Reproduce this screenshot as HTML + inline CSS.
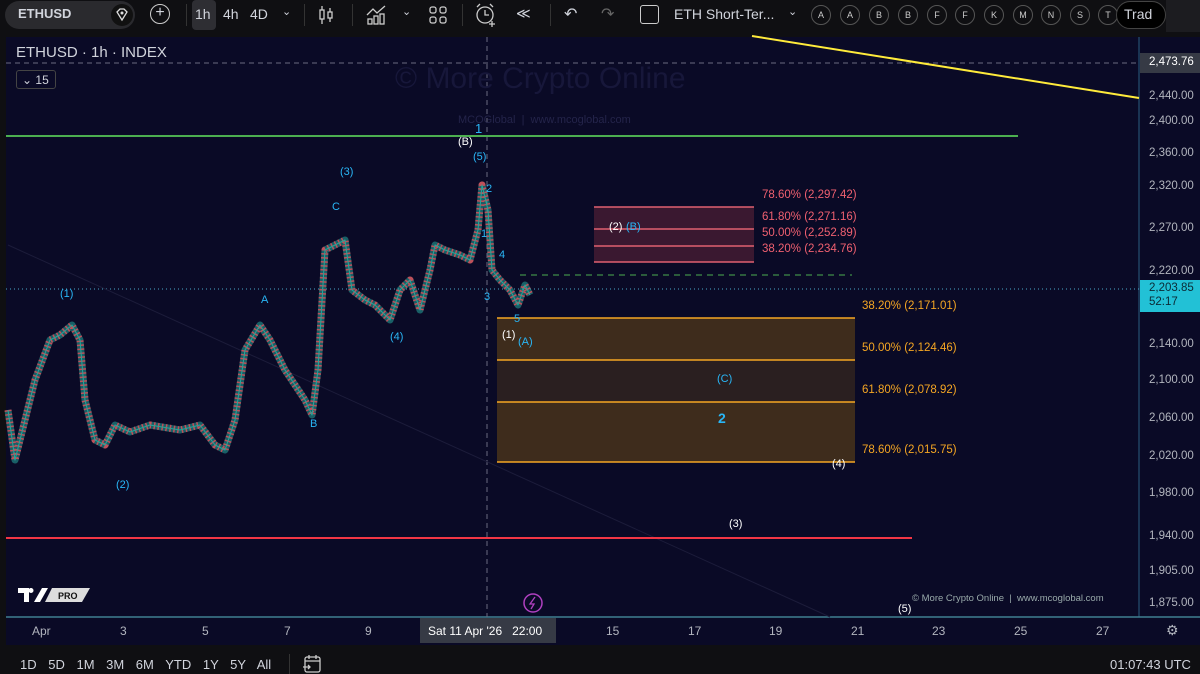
<!DOCTYPE html>
<html><head><meta charset="utf-8"><style>
*{margin:0;padding:0;box-sizing:border-box}
body{width:1200px;height:674px;background:#0f0f12;overflow:hidden;font-family:"Liberation Sans",sans-serif;color:#d1d4dc;position:relative}
.a{position:absolute;white-space:nowrap}
.tb{font-size:14px;color:#d1d4dc}
.circ{position:absolute;top:5px;width:20px;height:20px;border:1px solid #555;border-radius:50%;font-size:9px;text-align:center;line-height:18px;color:#ccc}
.px{position:absolute;left:1149px;font-size:11.5px;color:#b2b5be}
.tx{position:absolute;top:624px;font-size:12px;color:#b2b5be}
</style></head><body>
<!-- top toolbar -->
<div class="a" style="left:5px;top:1px;width:130px;height:28px;background:#2a2a2e;border-radius:14px"></div>
<div class="a tb" style="left:18px;top:6px;font-weight:bold;font-size:13px">ETHUSD</div>
<div class="a" style="left:111px;top:4px;width:22px;height:22px;border-radius:50%;background:#111"></div>
<svg class="a" style="left:114px;top:7px" width="16" height="16"><path d="M3 5 L6 2 H10 L13 5 L8 13 Z" fill="none" stroke="#ddd" stroke-width="1.3"/><circle cx="8" cy="6" r="1.5" fill="#ddd"/></svg>
<div class="a" style="left:150px;top:4px;width:20px;height:20px;border:1.5px solid #ccc;border-radius:50%;text-align:center;line-height:16px;font-size:16px">+</div>
<div class="a" style="left:186px;top:4px;width:1px;height:22px;background:#333"></div>
<div class="a" style="left:192px;top:0;width:24px;height:30px;background:#2e2e33;border-radius:4px"></div>
<div class="a tb" style="left:195px;top:6px">1h</div>
<div class="a tb" style="left:223px;top:6px">4h</div>
<div class="a tb" style="left:250px;top:6px">4D</div>
<div class="a tb" style="left:282px;top:5px;font-size:11px">⌄</div>
<div class="a" style="left:304px;top:4px;width:1px;height:22px;background:#333"></div>
<svg class="a" style="left:316px;top:5px" width="20" height="20" fill="none" stroke="#ccc" stroke-width="1.3"><line x1="6" y1="1" x2="6" y2="19"/><rect x="4" y="5" width="4" height="9" fill="#0f0f12"/><line x1="14" y1="3" x2="14" y2="17"/><rect x="12" y="7" width="4" height="6" fill="#0f0f12"/></svg>
<div class="a" style="left:352px;top:4px;width:1px;height:22px;background:#333"></div>
<svg class="a" style="left:365px;top:4px" width="22" height="22" fill="none" stroke="#ccc" stroke-width="1.3"><path d="M2 11 L8 5 L12 9 L20 2"/><rect x="3" y="15" width="4" height="5"/><rect x="9" y="12" width="4" height="8"/><rect x="15" y="10" width="4" height="10"/></svg>
<div class="a tb" style="left:402px;top:5px;font-size:11px">⌄</div>
<svg class="a" style="left:428px;top:5px" width="20" height="20" fill="none" stroke="#ccc" stroke-width="1.3"><rect x="2" y="2" width="6" height="6" rx="2"/><rect x="12" y="2" width="6" height="6" rx="2"/><rect x="2" y="12" width="6" height="6" rx="2"/><rect x="12" y="12" width="6" height="6" rx="2"/></svg>
<div class="a" style="left:462px;top:4px;width:1px;height:22px;background:#333"></div>
<svg class="a" style="left:474px;top:3px" width="24" height="24" fill="none" stroke="#ccc" stroke-width="1.3"><circle cx="11" cy="12" r="8"/><path d="M11 7 V12 H15 M3 4 L6 1 M19 4 L16 1 M18 18 V24 M15 21 H21"/></svg>
<div class="a tb" style="left:516px;top:5px;font-size:14px">≪</div>
<div class="a" style="left:550px;top:4px;width:1px;height:22px;background:#333"></div>
<div class="a tb" style="left:564px;top:4px;font-size:16px">↶</div>
<div class="a tb" style="left:601px;top:4px;font-size:16px;color:#666">↷</div>
<div class="a" style="left:640px;top:5px;width:19px;height:19px;border:1.5px solid #ccc;border-radius:3px"></div>
<div class="a tb" style="left:674px;top:6px">ETH Short-Ter...</div>
<div class="a tb" style="left:788px;top:5px;font-size:11px">⌄</div>
<div class="circ" style="left:811px">A</div><div class="circ" style="left:840px">A</div><div class="circ" style="left:869px">B</div><div class="circ" style="left:898px">B</div><div class="circ" style="left:927px">F</div><div class="circ" style="left:955px">F</div><div class="circ" style="left:984px">K</div><div class="circ" style="left:1013px">M</div><div class="circ" style="left:1041px">N</div><div class="circ" style="left:1070px">S</div><div class="circ" style="left:1098px">T</div>
<div class="a" style="left:1116px;top:1px;width:50px;height:28px;background:#000;border:1px solid #444;border-radius:14px"></div>
<div class="a tb" style="left:1124px;top:6px;font-size:14px">Trad</div>
<div class="a" style="left:1166px;top:0;width:34px;height:32px;background:#1c1c20"></div>
<!-- chart -->
<div class="a" style="left:6px;top:37px;width:1194px;height:608px;background:#0a0a26"></div>
<svg class="a" style="left:0;top:0" width="1200" height="674">
<line x1="1139" y1="37" x2="1139" y2="617" stroke="#2a5f80" stroke-width="1"/>
<line x1="6" y1="617" x2="1200" y2="617" stroke="#3f7f90" stroke-width="1.5"/>
<line x1="6" y1="63" x2="1139" y2="63" stroke="#6a6a80" stroke-dasharray="5,4" stroke-width="1"/>
<line x1="487" y1="37" x2="487" y2="617" stroke="#6a6a80" stroke-dasharray="5,4" stroke-width="1"/>
<line x1="6" y1="289" x2="1139" y2="289" stroke="#4aa8c8" stroke-dasharray="1,3" stroke-width="1"/>
<line x1="8" y1="245" x2="830" y2="617" stroke="#1c1c3a" stroke-width="1"/>
<line x1="752" y1="36" x2="1139" y2="98" stroke="#ffeb3b" stroke-width="2"/>
<line x1="6" y1="136" x2="1018" y2="136" stroke="#4caf50" stroke-width="2"/>
<line x1="6" y1="538" x2="912" y2="538" stroke="#f23645" stroke-width="2"/>
<line x1="520" y1="275" x2="852" y2="275" stroke="#4caf50" stroke-dasharray="6,5" stroke-width="1"/>
<rect x="497" y="318" width="358" height="42" fill="#3e2c1c"/>
<rect x="497" y="360" width="358" height="42" fill="#2a1f20"/>
<rect x="497" y="402" width="358" height="60" fill="#3e2c1c"/>
<g stroke="#f5a623" stroke-width="1.5"><line x1="497" y1="318" x2="855" y2="318"/><line x1="497" y1="360" x2="855" y2="360"/><line x1="497" y1="402" x2="855" y2="402"/><line x1="497" y1="462" x2="855" y2="462"/></g>
<rect x="594" y="207" width="160" height="55" fill="#3a1830"/>
<g stroke="#e06070" stroke-width="1.5"><line x1="594" y1="207" x2="754" y2="207"/><line x1="594" y1="229" x2="754" y2="229"/><line x1="594" y1="246" x2="754" y2="246"/><line x1="594" y1="262" x2="754" y2="262"/></g>
<g fill="none" stroke-linejoin="round">
<polyline stroke="#26a69a" stroke-width="7" opacity="0.55" points="8,410 15,460 25,420 35,380 50,340 60,335 72,325 80,340 85,400 95,440 105,445 115,425 130,432 150,425 180,430 200,425 215,445 225,450 235,420 245,350 260,325 270,340 285,370 295,385 305,400 312,415 318,370 325,250 335,245 345,240 352,290 365,300 375,305 390,320 400,290 410,280 420,310 430,270 435,245 445,250 460,255 470,260 478,230 482,185 488,210 492,270 500,280 510,290 518,305 525,285 530,295"/>
<polyline stroke="#c0505a" stroke-width="7" stroke-dasharray="1.5,2.5" points="8,410 15,460 25,420 35,380 50,340 60,335 72,325 80,340 85,400 95,440 105,445 115,425 130,432 150,425 180,430 200,425 215,445 225,450 235,420 245,350 260,325 270,340 285,370 295,385 305,400 312,415 318,370 325,250 335,245 345,240 352,290 365,300 375,305 390,320 400,290 410,280 420,310 430,270 435,245 445,250 460,255 470,260 478,230 482,185 488,210 492,270 500,280 510,290 518,305 525,285 530,295"/>
<polyline stroke="#26a69a" stroke-width="1" points="8,410 15,460 25,420 35,380 50,340 60,335 72,325 80,340 85,400 95,440 105,445 115,425 130,432 150,425 180,430 200,425 215,445 225,450 235,420 245,350 260,325 270,340 285,370 295,385 305,400 312,415 318,370 325,250 335,245 345,240 352,290 365,300 375,305 390,320 400,290 410,280 420,310 430,270 435,245 445,250 460,255 470,260 478,230 482,185 488,210 492,270 500,280 510,290 518,305 525,285 530,295"/>
</g>
<circle cx="533" cy="603" r="9" fill="none" stroke="#b040c0" stroke-width="1.5"/>
<path d="M535 597 L530 604 H534 L531 609" fill="none" stroke="#b040c0" stroke-width="1.3"/>
</svg>
<div class="a" style="left:16px;top:44px;font-size:15px;color:#d1d4dc">ETHUSD · 1h · INDEX</div>
<div class="a" style="left:16px;top:70px;width:40px;height:19px;border:1px solid #444;border-radius:3px;font-size:12px;padding:2px 5px">⌄ 15</div>
<div class="a" style="left:395px;top:62px;font-size:30px;color:#17173a">© More Crypto Online</div>
<div class="a" style="left:458px;top:114px;font-size:11px;color:#24244a">MCOGlobal &nbsp;|&nbsp; www.mcoglobal.com</div>
<!-- wave labels -->
<div class="a" style="font-size:11px;color:#29b6f6;left:60px;top:288px">(1)</div>
<div class="a" style="font-size:11px;color:#29b6f6;left:116px;top:479px">(2)</div>
<div class="a" style="font-size:11px;color:#29b6f6;left:340px;top:166px">(3)</div>
<div class="a" style="font-size:11px;color:#29b6f6;left:390px;top:331px">(4)</div>
<div class="a" style="font-size:11px;color:#29b6f6;left:473px;top:151px">(5)</div>
<div class="a" style="font-size:11px;color:#29b6f6;left:261px;top:294px">A</div>
<div class="a" style="font-size:11px;color:#29b6f6;left:310px;top:418px">B</div>
<div class="a" style="font-size:11px;color:#29b6f6;left:332px;top:201px">C</div>
<div class="a" style="font-size:13px;color:#29b6f6;left:475px;top:121px">1</div>
<div class="a" style="font-size:11px;color:#fff;left:458px;top:136px">(B)</div>
<div class="a" style="font-size:11px;color:#29b6f6;left:486px;top:183px">2</div>
<div class="a" style="font-size:11px;color:#29b6f6;left:481px;top:228px">1</div>
<div class="a" style="font-size:11px;color:#29b6f6;left:499px;top:249px">4</div>
<div class="a" style="font-size:11px;color:#29b6f6;left:484px;top:291px">3</div>
<div class="a" style="font-size:11px;color:#29b6f6;left:514px;top:313px">5</div>
<div class="a" style="font-size:11px;color:#fff;left:502px;top:329px">(1)</div>
<div class="a" style="font-size:11px;color:#29b6f6;left:518px;top:336px">(A)</div>
<div class="a" style="font-size:11px;color:#fff;left:609px;top:221px">(2)</div>
<div class="a" style="font-size:11px;color:#29b6f6;left:626px;top:221px">(B)</div>
<div class="a" style="font-size:11px;color:#29b6f6;left:717px;top:373px">(C)</div>
<div class="a" style="font-size:14px;color:#29b6f6;left:718px;top:410px;font-weight:bold">2</div>
<div class="a" style="font-size:11px;color:#fff;left:832px;top:458px">(4)</div>
<div class="a" style="font-size:11px;color:#fff;left:729px;top:518px">(3)</div>
<div class="a" style="font-size:11px;color:#fff;left:898px;top:603px">(5)</div>
<!-- fib labels -->
<div class="a" style="font-size:11.5px;color:#f06070;left:762px;top:189px">78.60% (2,297.42)</div>
<div class="a" style="font-size:11.5px;color:#f06070;left:762px;top:211px">61.80% (2,271.16)</div>
<div class="a" style="font-size:11.5px;color:#f06070;left:762px;top:227px">50.00% (2,252.89)</div>
<div class="a" style="font-size:11.5px;color:#f06070;left:762px;top:243px">38.20% (2,234.76)</div>
<div class="a" style="font-size:11.5px;color:#f5a623;left:862px;top:300px">38.20% (2,171.01)</div>
<div class="a" style="font-size:11.5px;color:#f5a623;left:862px;top:342px">50.00% (2,124.46)</div>
<div class="a" style="font-size:11.5px;color:#f5a623;left:862px;top:384px">61.80% (2,078.92)</div>
<div class="a" style="font-size:11.5px;color:#f5a623;left:862px;top:444px">78.60% (2,015.75)</div>
<div class="a" style="font-size:9.5px;color:#9aa;left:912px;top:593px">© More Crypto Online &nbsp;|&nbsp; www.mcoglobal.com</div>
<svg class="a" style="left:18px;top:587px" width="72" height="16"><path d="M0 1 H11 V15 H6 V6 H0 Z M13 1 A2.5 2.5 0 1 1 13 6 A2.5 2.5 0 1 1 13 1 Z M24 1 H30 L22 15 H16 Z" fill="#fff"/><path d="M34 1 H72 L64 15 H27 Z" fill="#ddd"/><text x="40" y="12" font-size="9" font-weight="bold" fill="#111" font-family="Liberation Sans">PRO</text></svg>
<!-- price axis -->
<div class="a" style="left:1140px;top:53px;width:60px;height:20px;background:#363a45"></div>
<div class="px" style="top:56px;color:#fff">2,473.76</div>
<div class="px" style="top:90px">2,440.00</div>
<div class="px" style="top:115px">2,400.00</div>
<div class="px" style="top:147px">2,360.00</div>
<div class="px" style="top:180px">2,320.00</div>
<div class="px" style="top:222px">2,270.00</div>
<div class="px" style="top:265px">2,220.00</div>
<div class="a" style="left:1140px;top:280px;width:60px;height:32px;background:#22c1d6"></div>
<div class="px" style="top:282px;color:#0b2a35">2,203.85</div>
<div class="px" style="top:296px;color:#0b2a35">52:17</div>
<div class="px" style="top:338px">2,140.00</div>
<div class="px" style="top:374px">2,100.00</div>
<div class="px" style="top:412px">2,060.00</div>
<div class="px" style="top:450px">2,020.00</div>
<div class="px" style="top:487px">1,980.00</div>
<div class="px" style="top:530px">1,940.00</div>
<div class="px" style="top:565px">1,905.00</div>
<div class="px" style="top:597px">1,875.00</div>
<!-- time axis -->
<div class="tx" style="left:32px">Apr</div><div class="tx" style="left:120px">3</div><div class="tx" style="left:202px">5</div><div class="tx" style="left:284px">7</div><div class="tx" style="left:365px">9</div>
<div class="a" style="left:420px;top:618px;width:136px;height:25px;background:#363a45"></div>
<div class="tx" style="left:428px;color:#fff">Sat 11 Apr '26 &nbsp; 22:00</div>
<div class="tx" style="left:606px">15</div><div class="tx" style="left:688px">17</div><div class="tx" style="left:769px">19</div><div class="tx" style="left:851px">21</div><div class="tx" style="left:932px">23</div><div class="tx" style="left:1014px">25</div><div class="tx" style="left:1096px">27</div>
<div class="tx" style="left:1166px;font-size:14px;top:622px">⚙</div>
<!-- bottom bar -->
<div class="a" style="left:0;top:645px;width:1200px;height:29px;background:#0f0f12"></div>
<div class="a" style="left:20px;top:657px;font-size:13px;color:#d1d4dc;word-spacing:8px">1D 5D 1M 3M 6M YTD 1Y 5Y All</div>
<div class="a" style="left:289px;top:654px;width:1px;height:20px;background:#333"></div>
<svg class="a" style="left:302px;top:654px" width="20" height="20" fill="none" stroke="#ccc" stroke-width="1.3"><rect x="3" y="3" width="15" height="15" rx="2"/><path d="M3 7 H18 M7 1 V5 M14 1 V5 M1 13 H8 M6 11 L8 13 L6 15"/></svg>
<div class="a" style="left:1110px;top:657px;font-size:13px;color:#d1d4dc">01:07:43 UTC</div>
</body></html>
